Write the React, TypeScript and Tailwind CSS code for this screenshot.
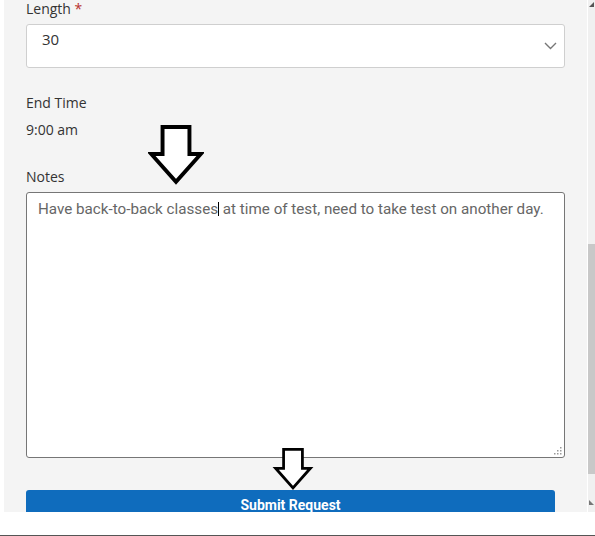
import React from "react";

const labelFont = { fontFamily: '"Open Sans", "Noto Sans", sans-serif' };

const DownArrow = ({ className }: { className: string }) => (
  <svg className={className} viewBox="0 0 54 58" fill="none">
    <path
      d="M14 2 H40 V28 H51 L27 55 L3 28 H14 Z"
      fill="white"
      stroke="black"
      strokeWidth="3.8"
      strokeLinejoin="miter"
    />
  </svg>
);

const App = () => {
  return (
    <div className="relative w-[595px] h-[536px] bg-white overflow-hidden">
      <div className="flex h-[512px] overflow-hidden">
        <div className="w-[4px] bg-white" />
        <div className="relative flex-1 bg-[#f4f4f4] px-[22px] overflow-hidden" style={labelFont}>
          <p className="text-[14px] leading-[18px] text-[#333]">
            Length <span className="text-[#b7312c]">*</span>
          </p>
          <div className="mt-[6px] h-[44px] bg-white border border-[#cfcfcf] rounded-[3px] flex items-start justify-between pl-[15px] pr-[7px]">
            <span className="mt-[3px] text-[15px] leading-[22px] text-[#333]">30</span>
            <svg className="mt-[17px] w-[13px] h-[8px]" viewBox="0 0 13 8" fill="none">
              <path d="M1 1 L6.5 6.5 L12 1" stroke="#777" strokeWidth="1.4" />
            </svg>
          </div>
          <p className="mt-[25px] text-[14px] leading-[20px] text-[#333]">End Time</p>
          <p className="mt-[7px] text-[14px] leading-[20px] text-[#333]">9:00 am</p>
          <p className="mt-[27px] text-[14px] leading-[20px] text-[#333]">Notes</p>
          <div
            className="relative mt-[5px] h-[266px] bg-white border border-[#767676] rounded-[3px] px-[11px] pt-[6px]"
            style={{ fontFamily: 'Roboto, "Liberation Sans", sans-serif' }}
          >
            <p className="text-[15.2px] leading-[20px] text-[#666] whitespace-nowrap">
              Have back-to-back classes
              <span className="inline-block w-px h-[14px] bg-black align-[-2px]" /> at time of test, need to take test on another day.
            </p>
            <svg className="absolute right-[2px] bottom-[2px] w-[8px] h-[8px]" viewBox="0 0 8 8">
              <rect x="6" y="0" width="1.5" height="1.5" fill="#999" />
              <rect x="3" y="3" width="1.5" height="1.5" fill="#999" />
              <rect x="6" y="3" width="1.5" height="1.5" fill="#999" />
              <rect x="0" y="6" width="1.5" height="1.5" fill="#999" />
              <rect x="3" y="6" width="1.5" height="1.5" fill="#999" />
              <rect x="6" y="6" width="1.5" height="1.5" fill="#999" />
            </svg>
          </div>
          <button
            className="mt-[32px] w-[529px] h-[30px] bg-[#0f6cbd] rounded-[3px] text-white text-[14px] font-bold leading-[20px] flex items-center justify-center"
            style={{ fontFamily: 'Roboto, "Liberation Sans", sans-serif' }}
          >
            Submit Request
          </button>

          <DownArrow className="absolute left-[144px] top-[125px] w-[56px] h-[60px]" />
          <DownArrow className="absolute left-[268px] top-[448px] w-[42px] h-[42px]" />
        </div>
        <div className="w-px bg-white" />
        <div className="relative w-[7px] bg-[#f0f0f0]">
          <svg className="absolute left-[1px] top-[2px] w-[6px] h-[5px]" viewBox="0 0 6 5">
            <path d="M0 5 L5 0 L5 5 Z" fill="#555" />
          </svg>
          <div className="absolute left-0 right-0 top-[244px] h-[230px] bg-[#c8c8c8]" />
          <svg className="absolute left-[1px] top-[500px] w-[6px] h-[5px]" viewBox="0 0 6 5">
            <path d="M0 0 L5 5 L0 5 Z" fill="#777" />
          </svg>
        </div>
      </div>
      <div className="h-[24px] border-b border-[#555]" />
    </div>
  );
};

export default App;
